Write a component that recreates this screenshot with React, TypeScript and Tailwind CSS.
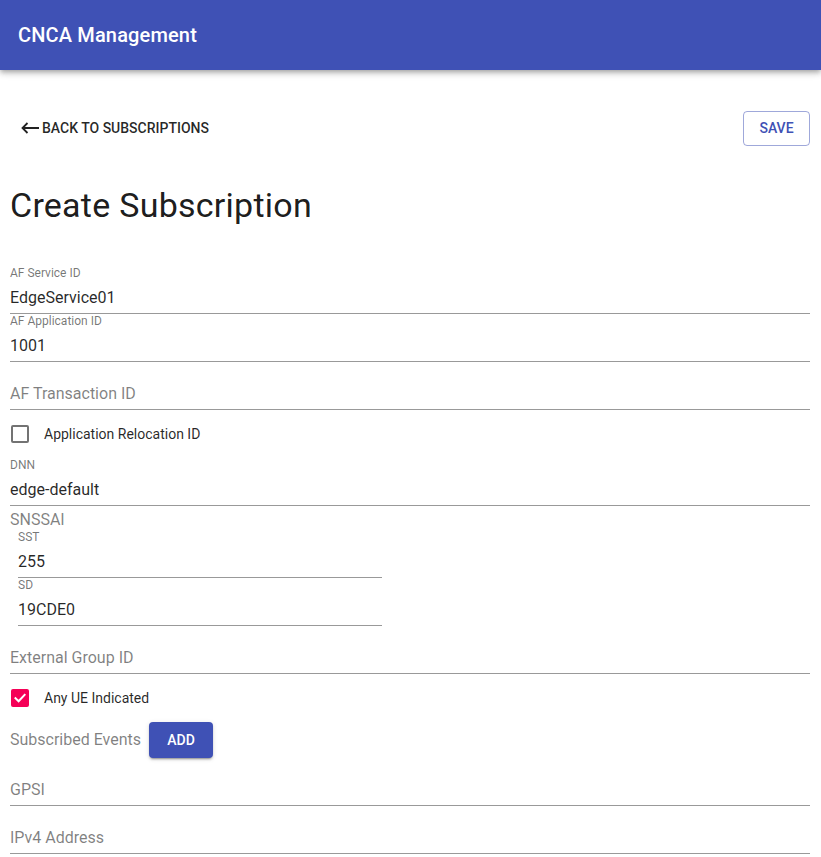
import { ReactNode } from 'react';

function Field({ label, value, className = '' }: { label: string; value?: string; className?: string }) {
  const filled = !!value;
  return (
    <div className={`relative h-[48px] border-b border-black/40 ${className}`}>
      {filled ? (
        <>
          <div className="absolute left-0 top-[1px] text-[12px] leading-[12px] text-black/55">{label}</div>
          <div className="pt-[22px] text-[16px] leading-[19px] text-black/85">{value}</div>
        </>
      ) : (
        <div className="pt-[22px] text-[16px] leading-[19px] text-black/50">{label}</div>
      )}
    </div>
  );
}

function CheckRow({ checked, children }: { checked?: boolean; children: ReactNode }) {
  return (
    <div className="flex h-[48px] items-center">
      <div className="flex w-[34px] pl-[1px]">
        {checked ? (
          <div className="flex h-[18px] w-[18px] items-center justify-center rounded-[2px] bg-[#f50057]">
            <svg width="14" height="14" viewBox="0 0 14 14" fill="none">
              <path d="M2.5 7.2 L5.6 10.2 L11.6 3.8" stroke="white" strokeWidth="2" strokeLinecap="square" />
            </svg>
          </div>
        ) : (
          <div className="h-[18px] w-[18px] rounded-[2px] border-2 border-black/55" />
        )}
      </div>
      <span className="text-[14px] text-black/85">{children}</span>
    </div>
  );
}

export default function App() {
  return (
    <div className="min-h-screen bg-white font-['Roboto',sans-serif]">
      <header className="flex h-[70px] items-center bg-[#3f51b5] px-[18px] shadow-[0_2px_4px_-1px_rgba(0,0,0,0.2),0_4px_5px_0_rgba(0,0,0,0.14),0_1px_10px_0_rgba(0,0,0,0.12)]">
        <h1 className="text-[20px] font-medium leading-[32px] tracking-[0.0075em] text-white">CNCA Management</h1>
      </header>

      <main className="pl-[10px] pr-[11px]">
        <div className="mt-[40px] flex h-[36px] items-center justify-between">
          <button className="ml-[11px] flex items-center gap-[3px] text-[14px] font-medium uppercase text-black/85">
            <svg width="18" height="12" viewBox="0 0 18 12" fill="none">
              <path d="M1.5 6 H18 M6.5 1 L1.5 6 L6.5 11" stroke="#222" strokeWidth="1.8" />
            </svg>
            Back to Subscriptions
          </button>
          <button className="flex h-[35px] w-[67px] items-center justify-center rounded-[4px] border border-[#3f51b5]/50 text-[14px] font-medium uppercase text-[#3f51b5]">
            Save
          </button>
        </div>

        <h2 className="mt-[38px] mb-[40px] text-[34px] leading-[42px] tracking-[0.00735em] text-black/90">Create Subscription</h2>

        <Field label="AF Service ID" value="EdgeService01" />
        <Field label="AF Application ID" value="1001" />
        <Field label="AF Transaction ID" />
        <CheckRow>Application Relocation ID</CheckRow>
        <Field label="DNN" value="edge-default" />

        <div className="h-[24px] pt-[6px] text-[16px] leading-[16px] text-black/50">SNSSAI</div>
        <div className="pl-[8px]">
          <Field label="SST" value="255" className="w-[364px]" />
          <Field label="SD" value="19CDE0" className="w-[364px]" />
        </div>

        <Field label="External Group ID" />
        <CheckRow checked>Any UE Indicated</CheckRow>

        <div className="flex h-[36px] items-center gap-[8px]">
          <span className="text-[16px] text-black/50">Subscribed Events</span>
          <button className="flex h-[36px] w-[64px] items-center justify-center rounded-[4px] bg-[#3f51b5] text-[14px] font-medium uppercase text-white shadow-[0_3px_1px_-2px_rgba(0,0,0,0.2),0_2px_2px_0_rgba(0,0,0,0.14),0_1px_5px_0_rgba(0,0,0,0.12)]">
            Add
          </button>
        </div>

        <Field label="GPSI" />
        <Field label="IPv4 Address" />
      </main>
    </div>
  );
}
